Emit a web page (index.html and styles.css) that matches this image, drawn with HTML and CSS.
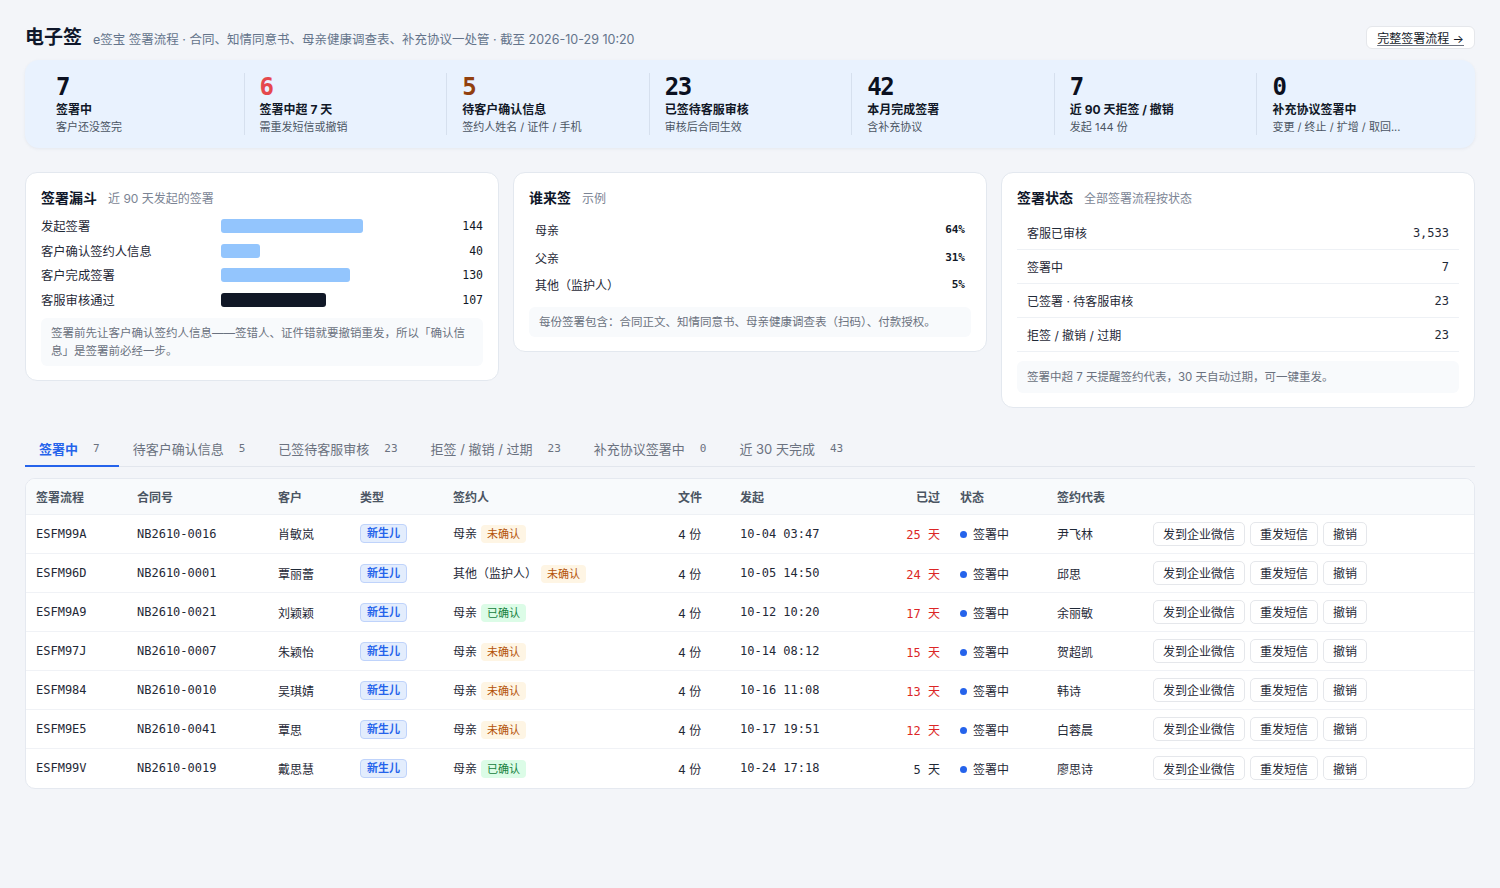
FILE: index.html
```html
<!DOCTYPE html>
<html lang="zh-CN">
<head>
<meta charset="utf-8">
<title>电子签</title>
<link rel="stylesheet" href="styles.css">
</head>
<body>
<div class="page">
  <header class="top">
    <div class="top-title">
      <h1>电子签</h1>
      <span class="top-sub">e签宝 签署流程 · 合同、知情同意书、母亲健康调查表、补充协议一处管 · 截至 2026-10-29 10:20</span>
    </div>
    <a class="flow-btn" href="#">完整签署流程 →</a>
  </header>

  <section class="kpis">
    <div class="kpi"><div class="kpi-num">7</div><div class="kpi-label">签署中</div><div class="kpi-sub">客户还没签完</div></div>
    <div class="kpi"><div class="kpi-num red">6</div><div class="kpi-label">签署中超 7 天</div><div class="kpi-sub">需重发短信或撤销</div></div>
    <div class="kpi"><div class="kpi-num brown">5</div><div class="kpi-label">待客户确认信息</div><div class="kpi-sub">签约人姓名 / 证件 / 手机</div></div>
    <div class="kpi"><div class="kpi-num">23</div><div class="kpi-label">已签待客服审核</div><div class="kpi-sub">审核后合同生效</div></div>
    <div class="kpi"><div class="kpi-num">42</div><div class="kpi-label">本月完成签署</div><div class="kpi-sub">含补充协议</div></div>
    <div class="kpi"><div class="kpi-num">7</div><div class="kpi-label">近 90 天拒签 / 撤销</div><div class="kpi-sub">发起 144 份</div></div>
    <div class="kpi"><div class="kpi-num">0</div><div class="kpi-label">补充协议签署中</div><div class="kpi-sub">变更 / 终止 / 扩增 / 取回...</div></div>
  </section>

  <section class="cards">
    <div class="card">
      <div class="card-head"><b>签署漏斗</b><span>近 90 天发起的签署</span></div>
      <div class="funnel">
        <div class="f-row"><span class="f-label">发起签署</span><span class="f-track"><span class="f-bar" style="width:142px"></span></span><span class="f-val">144</span></div>
        <div class="f-row"><span class="f-label">客户确认签约人信息</span><span class="f-track"><span class="f-bar" style="width:39px"></span></span><span class="f-val">40</span></div>
        <div class="f-row"><span class="f-label">客户完成签署</span><span class="f-track"><span class="f-bar" style="width:129px"></span></span><span class="f-val">130</span></div>
        <div class="f-row"><span class="f-label">客服审核通过</span><span class="f-track"><span class="f-bar dark" style="width:105px"></span></span><span class="f-val">107</span></div>
      </div>
      <p class="note">签署前先让客户确认签约人信息——签错人、证件错就要撤销重发，所以「确认信息」是签署前必经一步。</p>
    </div>

    <div class="card">
      <div class="card-head"><b>谁来签</b><span>示例</span></div>
      <div class="who">
        <div class="w-row"><span>母亲</span><b>64%</b></div>
        <div class="w-row"><span>父亲</span><b>31%</b></div>
        <div class="w-row"><span>其他（监护人）</span><b>5%</b></div>
      </div>
      <p class="note">每份签署包含：合同正文、知情同意书、母亲健康调查表（扫码）、付款授权。</p>
    </div>

    <div class="card">
      <div class="card-head"><b>签署状态</b><span>全部签署流程按状态</span></div>
      <div class="status-list">
        <div class="s-row"><span>客服已审核</span><span class="s-val">3,533</span></div>
        <div class="s-row"><span>签署中</span><span class="s-val">7</span></div>
        <div class="s-row"><span>已签署 · 待客服审核</span><span class="s-val">23</span></div>
        <div class="s-row"><span>拒签 / 撤销 / 过期</span><span class="s-val">23</span></div>
      </div>
      <p class="note roomy">签署中超 7 天提醒签约代表，30 天自动过期，可一键重发。</p>
    </div>
  </section>

  <nav class="tabs">
    <a class="tab active" href="#">签署中<span class="cnt">7</span></a>
    <a class="tab" href="#">待客户确认信息<span class="cnt">5</span></a>
    <a class="tab" href="#">已签待客服审核<span class="cnt">23</span></a>
    <a class="tab" href="#">拒签 / 撤销 / 过期<span class="cnt">23</span></a>
    <a class="tab" href="#">补充协议签署中<span class="cnt">0</span></a>
    <a class="tab" href="#">近 30 天完成<span class="cnt">43</span></a>
  </nav>

  <section class="table-card">
    <table class="grid">
      <colgroup>
        <col class="c1"><col class="c2"><col class="c3"><col class="c4"><col class="c5"><col class="c6"><col class="c7"><col class="c8"><col class="c9"><col class="c10"><col>
      </colgroup>
      <thead>
        <tr><th>签署流程</th><th>合同号</th><th>客户</th><th>类型</th><th>签约人</th><th>文件</th><th>发起</th><th class="r">已过</th><th>状态</th><th>签约代表</th><th></th></tr>
      </thead>
      <tbody>
        <tr><td class="mono">ESFM99A</td><td class="mono">NB2610-0016</td><td>肖敏岚</td><td><span class="type">新生儿</span></td><td>母亲<span class="tag warn">未确认</span></td><td>4 份</td><td class="mono">10-04 03:47</td><td class="r late"><span class="mono">25</span> 天</td><td><span class="dot"></span>签署中</td><td>尹飞林</td><td class="acts"><button>发到企业微信</button><button>重发短信</button><button>撤销</button></td></tr>
        <tr><td class="mono">ESFM96D</td><td class="mono">NB2610-0001</td><td>覃丽蕾</td><td><span class="type">新生儿</span></td><td>其他（监护人）<span class="tag warn">未确认</span></td><td>4 份</td><td class="mono">10-05 14:50</td><td class="r late"><span class="mono">24</span> 天</td><td><span class="dot"></span>签署中</td><td>邱思</td><td class="acts"><button>发到企业微信</button><button>重发短信</button><button>撤销</button></td></tr>
        <tr><td class="mono">ESFM9A9</td><td class="mono">NB2610-0021</td><td>刘颖颖</td><td><span class="type">新生儿</span></td><td>母亲<span class="tag ok">已确认</span></td><td>4 份</td><td class="mono">10-12 10:20</td><td class="r late"><span class="mono">17</span> 天</td><td><span class="dot"></span>签署中</td><td>余丽敏</td><td class="acts"><button>发到企业微信</button><button>重发短信</button><button>撤销</button></td></tr>
        <tr><td class="mono">ESFM97J</td><td class="mono">NB2610-0007</td><td>朱颖怡</td><td><span class="type">新生儿</span></td><td>母亲<span class="tag warn">未确认</span></td><td>4 份</td><td class="mono">10-14 08:12</td><td class="r late"><span class="mono">15</span> 天</td><td><span class="dot"></span>签署中</td><td>贺超凯</td><td class="acts"><button>发到企业微信</button><button>重发短信</button><button>撤销</button></td></tr>
        <tr><td class="mono">ESFM984</td><td class="mono">NB2610-0010</td><td>吴琪婧</td><td><span class="type">新生儿</span></td><td>母亲<span class="tag warn">未确认</span></td><td>4 份</td><td class="mono">10-16 11:08</td><td class="r late"><span class="mono">13</span> 天</td><td><span class="dot"></span>签署中</td><td>韩诗</td><td class="acts"><button>发到企业微信</button><button>重发短信</button><button>撤销</button></td></tr>
        <tr><td class="mono">ESFM9E5</td><td class="mono">NB2610-0041</td><td>覃思</td><td><span class="type">新生儿</span></td><td>母亲<span class="tag warn">未确认</span></td><td>4 份</td><td class="mono">10-17 19:51</td><td class="r late"><span class="mono">12</span> 天</td><td><span class="dot"></span>签署中</td><td>白蓉晨</td><td class="acts"><button>发到企业微信</button><button>重发短信</button><button>撤销</button></td></tr>
        <tr><td class="mono">ESFM99V</td><td class="mono">NB2610-0019</td><td>戴思慧</td><td><span class="type">新生儿</span></td><td>母亲<span class="tag ok">已确认</span></td><td>4 份</td><td class="mono">10-24 17:18</td><td class="r"><span class="mono">5</span> 天</td><td><span class="dot"></span>签署中</td><td>廖思诗</td><td class="acts"><button>发到企业微信</button><button>重发短信</button><button>撤销</button></td></tr>
      </tbody>
    </table>
  </section>
</div>
</body>
</html>
```

FILE: styles.css
```css
* { box-sizing: border-box; }

html, body {
  margin: 0;
  background: #f3f5f9;
  color: #111827;
  font-family: Inter, "Noto Sans CJK SC", sans-serif;
  font-size: 12px;
}

.page {
  padding: 20px 25px 40px;
}

.mono {
  font-family: "DejaVu Sans Mono", monospace;
}

/* header */
.top {
  display: flex;
  align-items: center;
  justify-content: space-between;
  height: 30px;
}

.top-title {
  display: flex;
  align-items: baseline;
  gap: 11px;
}

.top-title h1 {
  margin: 0;
  font-size: 19px;
  font-weight: 700;
  color: #0f172a;
}

.top-sub {
  font-size: 12.5px;
  color: #64748b;
}

.flow-btn {
  display: inline-flex;
  align-items: center;
  height: 23px;
  margin-top: 4px;
  padding: 0 10px;
  background: #fff;
  border: 1px solid #e5e7eb;
  border-radius: 6px;
  color: #111827;
  font-size: 12px;
  text-decoration: underline;
  text-underline-offset: 2px;
  text-decoration-color: #6b7280;
}

/* KPI strip */
.kpis {
  margin-top: 10px;
  display: grid;
  grid-template-columns: repeat(7, 1fr);
  padding: 13px 16px;
  background: #e9f2fe;
  border-radius: 14px;
  box-shadow: 0 1px 3px rgba(148, 163, 184, 0.15);
}

.kpi {
  padding: 0 15px;
  height: 62px;
  border-left: 1px solid #d6e0ee;
}

.kpi:first-child {
  border-left: none;
}

.kpi-num {
  font-family: "DejaVu Sans Mono", monospace;
  font-weight: 700;
  font-size: 24px;
  line-height: 28px;
  letter-spacing: -1.5px;
  color: #0b1020;
}

.kpi-num.red { color: #e5484d; }
.kpi-num.brown { color: #92400e; }

.kpi-label {
  font-size: 12px;
  font-weight: 700;
  line-height: 18px;
  color: #111827;
}

.kpi-sub {
  font-size: 11px;
  line-height: 17px;
  color: #4b5563;
}

/* cards */
.cards {
  margin-top: 24px;
  display: grid;
  grid-template-columns: repeat(3, 1fr);
  gap: 14px;
  align-items: start;
}

.card {
  background: #fff;
  border: 1px solid #e3e8ef;
  border-radius: 12px;
  padding: 14px 15px;
}

.card-head {
  display: flex;
  align-items: baseline;
  gap: 11px;
  height: 21px;
}

.card-head b {
  font-size: 14px;
  font-weight: 700;
  color: #0f172a;
}

.card-head span {
  font-size: 12px;
  color: #7b8494;
}

.note {
  margin: 0;
  background: #f8fafc;
  border-radius: 6px;
  color: #6b7280;
  font-size: 11.5px;
  line-height: 18px;
  padding: 6px 10px;
}

.note.roomy {
  padding: 7px 10px;
}

/* funnel */
.funnel {
  margin-top: 6px;
  margin-bottom: 6px;
}

.f-row {
  display: flex;
  align-items: center;
  height: 24.5px;
}

.f-label {
  width: 180px;
  font-size: 12.3px;
  color: #1f2937;
}

.f-track {
  flex: 1;
  display: flex;
}

.f-bar {
  height: 14px;
  border-radius: 3px;
  background: #93c5fd;
}

.f-bar.dark {
  background: #111827;
}

.f-val {
  width: 60px;
  text-align: right;
  font-family: "DejaVu Sans Mono", monospace;
  font-size: 11.5px;
  color: #111827;
}

/* who signs */
.who {
  margin-top: 8px;
  margin-bottom: 8px;
}

.w-row {
  display: flex;
  justify-content: space-between;
  align-items: center;
  height: 27.5px;
  padding: 0 6px;
  font-size: 12px;
  color: #1f2937;
}

.w-row b {
  font-family: "DejaVu Sans Mono", monospace;
  font-size: 11px;
  font-weight: 700;
  color: #111827;
}

/* status list */
.status-list {
  margin-top: 8px;
  margin-bottom: 9px;
}

.s-row {
  display: flex;
  justify-content: space-between;
  align-items: center;
  height: 34px;
  padding: 0 10px;
  border-bottom: 1px solid #eef1f5;
  font-size: 12px;
  color: #1f2937;
}

.s-val {
  font-family: "DejaVu Sans Mono", monospace;
  font-size: 12px;
}

/* tabs */
.tabs {
  margin-top: 24px;
  display: flex;
  border-bottom: 1px solid #e2e6ed;
}

.tab {
  display: flex;
  align-items: center;
  gap: 15px;
  padding: 0 19px 0 14px;
  height: 35px;
  font-size: 13px;
  color: #6b7280;
  text-decoration: none;
  border-bottom: 2px solid transparent;
  margin-bottom: -1px;
}

.tab .cnt {
  font-family: "DejaVu Sans Mono", monospace;
  font-size: 11px;
  color: #6b7280;
}

.tab.active {
  color: #2563eb;
  font-weight: 700;
  border-bottom-color: #2563eb;
}

.tab.active .cnt {
  font-weight: 400;
  color: #6b7280;
}

/* table */
.table-card {
  margin-top: 11px;
  background: #fff;
  border: 1px solid #e5e9f0;
  border-radius: 10px;
  overflow: hidden;
}

.grid {
  width: 100%;
  border-collapse: collapse;
  table-layout: fixed;
}

col.c1 { width: 101px; }
col.c2 { width: 141px; }
col.c3 { width: 82px; }
col.c4 { width: 93px; }
col.c5 { width: 225px; }
col.c6 { width: 62px; }
col.c7 { width: 140px; }
col.c8 { width: 80px; }
col.c9 { width: 97px; }
col.c10 { width: 96px; }

.grid th {
  height: 35px;
  background: #f8fafc;
  text-align: left;
  font-weight: 700;
  font-size: 12px;
  color: #4b5563;
  padding: 0 10px;
  border-bottom: 1px solid #eef1f5;
}

.grid td {
  height: 39px;
  padding: 0 10px;
  font-size: 12px;
  color: #1f2937;
  border-bottom: 1px solid #f0f2f6;
  white-space: nowrap;
}

.grid tbody tr:last-child td {
  border-bottom: none;
}

.grid td.mono {
  font-size: 12px;
  color: #1f2937;
}

.grid .r {
  text-align: right;
}

.grid td.late {
  color: #dc2626;
}

.grid td.r .mono {
  font-size: 12px;
  margin-right: 4px;
}

.type {
  display: inline-block;
  padding: 0 6px;
  line-height: 17px;
  border: 1px solid #bfd3fb;
  background: #e3edfd;
  color: #2563eb;
  font-weight: 700;
  border-radius: 4px;
  font-size: 11px;
}

.tag {
  display: inline-block;
  margin-left: 4px;
  padding: 0 6px;
  line-height: 18px;
  border-radius: 4px;
  font-size: 11px;
}

.tag.warn {
  background: #fef5e4;
  color: #b45309;
}

.tag.ok {
  background: #dcfce7;
  color: #15803d;
}

.dot {
  display: inline-block;
  width: 7px;
  height: 7px;
  border-radius: 50%;
  background: #2563eb;
  margin-right: 6px;
  vertical-align: 1px;
}

.grid td.acts {
  display: flex;
  gap: 5px;
  align-items: center;
}

.acts button {
  font-family: Inter, "Noto Sans CJK SC", sans-serif;
  font-size: 12px;
  color: #1f2937;
  background: #fff;
  border: 1px solid #e5e7eb;
  border-radius: 5px;
  height: 24px;
  padding: 0 9px;
}
```
